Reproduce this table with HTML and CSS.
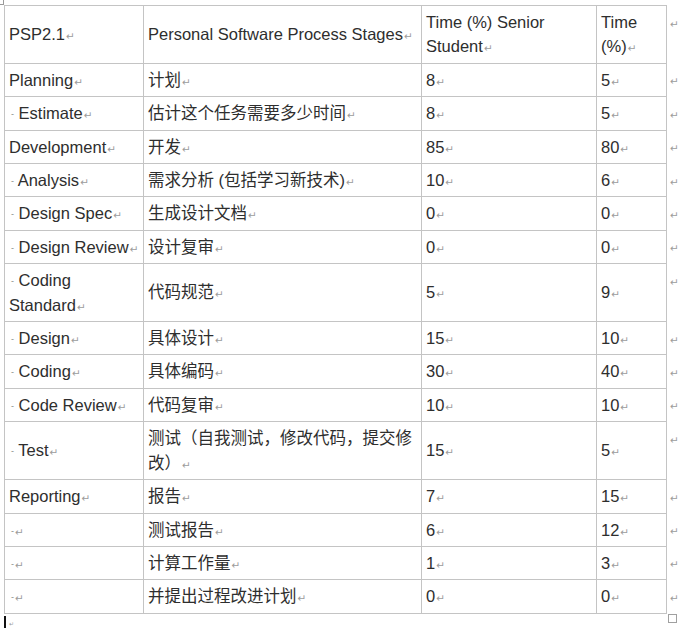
FILE: index.html
```html
<!DOCTYPE html>
<html>
<head>
<meta charset="utf-8">
<link rel="stylesheet" href="styles.css">
</head>
<body>
<div class="corner"></div>
<table class="psp">
  <colgroup><col class="c1"><col class="c2"><col class="c3"><col class="c4"><col class="c5"></colgroup>
  <tr><td>PSP2.1<span class="m">↵</span></td><td>Personal Software Process Stages<span class="m">↵</span></td><td>Time (%) Senior<br>Student<span class="m">↵</span></td><td>Time<br>(%)<span class="m">↵</span></td><td class="eol"><span class="m">↵</span></td></tr>
  <tr><td>Planning<span class="m">↵</span></td><td>计划<span class="m">↵</span></td><td>8<span class="m">↵</span></td><td>5<span class="m">↵</span></td><td class="eol"><span class="m">↵</span></td></tr>
  <tr><td><span class="d">-</span> Estimate<span class="m">↵</span></td><td>估计这个任务需要多少时间<span class="m">↵</span></td><td>8<span class="m">↵</span></td><td>5<span class="m">↵</span></td><td class="eol"><span class="m">↵</span></td></tr>
  <tr><td>Development<span class="m">↵</span></td><td>开发<span class="m">↵</span></td><td>85<span class="m">↵</span></td><td>80<span class="m">↵</span></td><td class="eol"><span class="m">↵</span></td></tr>
  <tr><td><span class="d">-</span> Analysis<span class="m">↵</span></td><td>需求分析 (包括学习新技术)<span class="m">↵</span></td><td>10<span class="m">↵</span></td><td>6<span class="m">↵</span></td><td class="eol"><span class="m">↵</span></td></tr>
  <tr><td><span class="d">-</span> Design Spec<span class="m">↵</span></td><td>生成设计文档<span class="m">↵</span></td><td>0<span class="m">↵</span></td><td>0<span class="m">↵</span></td><td class="eol"><span class="m">↵</span></td></tr>
  <tr><td><span class="d">-</span> Design Review<span class="m">↵</span></td><td>设计复审<span class="m">↵</span></td><td>0<span class="m">↵</span></td><td>0<span class="m">↵</span></td><td class="eol"><span class="m">↵</span></td></tr>
  <tr><td><span class="d">-</span> Coding<br>Standard<span class="m">↵</span></td><td>代码规范<span class="m">↵</span></td><td>5<span class="m">↵</span></td><td>9<span class="m">↵</span></td><td class="eol"><span class="m">↵</span></td></tr>
  <tr><td><span class="d">-</span> Design<span class="m">↵</span></td><td>具体设计<span class="m">↵</span></td><td>15<span class="m">↵</span></td><td>10<span class="m">↵</span></td><td class="eol"><span class="m">↵</span></td></tr>
  <tr><td><span class="d">-</span> Coding<span class="m">↵</span></td><td>具体编码<span class="m">↵</span></td><td>30<span class="m">↵</span></td><td>40<span class="m">↵</span></td><td class="eol"><span class="m">↵</span></td></tr>
  <tr><td><span class="d">-</span> Code Review<span class="m">↵</span></td><td>代码复审<span class="m">↵</span></td><td>10<span class="m">↵</span></td><td>10<span class="m">↵</span></td><td class="eol"><span class="m">↵</span></td></tr>
  <tr><td><span class="d">-</span> Test<span class="m">↵</span></td><td>测试（自我测试，修改代码，提交修<br>改）<span class="m">↵</span></td><td>15<span class="m">↵</span></td><td>5<span class="m">↵</span></td><td class="eol"><span class="m">↵</span></td></tr>
  <tr><td>Reporting<span class="m">↵</span></td><td>报告<span class="m">↵</span></td><td>7<span class="m">↵</span></td><td>15<span class="m">↵</span></td><td class="eol"><span class="m">↵</span></td></tr>
  <tr><td><span class="d">-</span><span class="m">↵</span></td><td>测试报告<span class="m">↵</span></td><td>6<span class="m">↵</span></td><td>12<span class="m">↵</span></td><td class="eol"><span class="m">↵</span></td></tr>
  <tr><td><span class="d">-</span><span class="m">↵</span></td><td>计算工作量<span class="m">↵</span></td><td>1<span class="m">↵</span></td><td>3<span class="m">↵</span></td><td class="eol"><span class="m">↵</span></td></tr>
  <tr><td><span class="d">-</span><span class="m">↵</span></td><td>并提出过程改进计划<span class="m">↵</span></td><td>0<span class="m">↵</span></td><td>0<span class="m">↵</span></td><td class="eol"><span class="m">↵</span></td></tr>
</table>
<div class="foot">
  <span class="cursor"></span><span class="m small">↵</span>
  <span class="handle"></span>
</div>
</body>
</html>
```

FILE: styles.css
```css
html, body {
  margin: 0;
  padding: 0;
  background: #ffffff;
}

body {
  font-family: "Liberation Sans", Arial, "Noto Sans CJK SC", sans-serif;
  font-size: 16.5px;
  color: #2e2e2e;
}

.corner {
  width: 3px;
  height: 4px;
  border-right: 1px solid #9a9a9a;
  border-bottom: 1px solid #9a9a9a;
}

.psp {
  border-collapse: collapse;
  table-layout: fixed;
  width: 677px;
  margin-left: 4px;
}

.c1 { width: 139px; }
.c2 { width: 278px; }
.c3 { width: 175px; }
.c4 { width: 70px; }
.c5 { width: 15px; }

.psp td {
  border: 1px solid #c4c4c4;
  padding: 4px 4px 4px 4px;
  line-height: 24.4px;
  vertical-align: middle;
  text-align: left;
  white-space: nowrap;
}

.psp td.eol {
  border: none;
  padding: 4px 0 4px 2px;
  vertical-align: top;
}

.m {
  font-family: "DejaVu Sans", sans-serif;
  font-size: 10.5px;
  line-height: 0;
  color: #9c9c9c;
  margin-left: 1px;
}

.d {
  font-size: 9px;
  line-height: 0;
  color: #8a8a8a;
  margin-left: 2px;
  vertical-align: 2px;
}

.foot {
  display: flex;
  align-items: flex-start;
  width: 673px;
  margin-left: 4px;
  height: 15px;
}

.cursor {
  display: block;
  width: 2px;
  height: 15px;
  margin-top: 2px;
  background: #111111;
}

.small {
  margin-left: 3px;
  margin-top: 6px;
  line-height: 8px;
  font-size: 6px;
}

.handle {
  display: block;
  margin-left: auto;
  margin-top: 0;
  width: 7px;
  height: 7px;
  border: 1px solid #a0a0a0;
}
```
